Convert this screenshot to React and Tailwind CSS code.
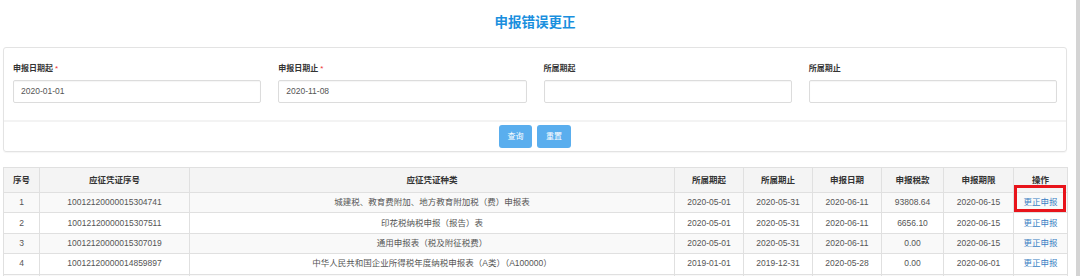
import React from "react";

const rows = [
  ["1", "10012120000015304741", "城建税、教育费附加、地方教育附加税（费）申报表", "2020-05-01", "2020-05-31", "2020-06-11", "93808.64", "2020-06-15"],
  ["2", "10012120000015307511", "印花税纳税申报（报告）表", "2020-05-01", "2020-05-31", "2020-06-11", "6656.10", "2020-06-15"],
  ["3", "10012120000015307019", "通用申报表（税及附征税费）", "2020-05-01", "2020-05-31", "2020-06-11", "0.00", "2020-06-15"],
  ["4", "10012120000014859897", "中华人民共和国企业所得税年度纳税申报表（A类）（A100000）", "2019-01-01", "2019-12-31", "2020-05-28", "0.00", "2020-06-01"],
  ["", "", "", "", "", "", "", ""],
];

const widths = [36, 150, 485, 69, 69, 69, 62, 70, 54];
const heads = ["序号", "应征凭证序号", "应征凭证种类", "所属期起", "所属期止", "申报日期", "申报税款", "申报期限", "操作"];

function Field({ label, required, value }) {
  return (
    <div className="flex flex-col">
      <div className="h-[10px] flex items-center text-[8px] font-bold text-[#333] leading-none">
        {label}
        {required && <span className="text-[#e33] ml-[2px] font-normal text-[8px]">*</span>}
      </div>
      <div className="mt-[6px] h-[23px] border border-[#dcdcdc] rounded-[2px] flex items-center pl-[7px] text-[8.5px] text-[#555] shadow-[inset_0_1px_1px_rgba(0,0,0,0.04)]">
        {value}
      </div>
    </div>
  );
}

export default function App() {
  return (
    <div
      className="relative w-[1080px] h-[276px] overflow-hidden bg-white"
      style={{ fontFamily: '"Liberation Sans", Arial, "Noto Sans CJK SC", sans-serif' }}
    >
      <div className="pl-[3px] w-[1067px]">
        <div className="h-[47px] flex items-center justify-center pb-[1px]">
          <h1 className="text-[13.5px] font-bold text-[#1a8fde]">申报错误更正</h1>
        </div>

        <div className="border border-[#e3e3e3] rounded-[3px] shadow-[0_1px_1px_rgba(0,0,0,0.04)]">
          <div className="h-[72px] pt-[16px] px-[9px] grid grid-cols-4 gap-x-[17px]">
            <Field label="申报日期起" required value="2020-01-01" />
            <Field label="申报日期止" required value="2020-11-08" />
            <Field label="所属期起" value="" />
            <Field label="所属期止" value="" />
          </div>
          <div className="h-[2px] bg-[#f3f3f3]" />
          <div className="h-[29px] flex items-center justify-center gap-[5px]">
            <button className="w-[33px] h-[23px] rounded-[3px] bg-[#5aaeee] text-white text-[8px]">查询</button>
            <button className="w-[34px] h-[23px] rounded-[3px] bg-[#5aaeee] text-white text-[8px]">重置</button>
          </div>
        </div>

        <table className="mt-[15px] w-[1064px] table-fixed border-collapse text-[8.5px] text-[#555]">
          <colgroup>
            {widths.map((w, i) => (
              <col key={i} style={{ width: w }} />
            ))}
          </colgroup>
          <thead>
            <tr className="h-[25px] bg-[#f4f4f4]">
              {heads.map((h) => (
                <th key={h} className="border border-[#e0e0e0] font-bold text-[#333] text-center">
                  {h}
                </th>
              ))}
            </tr>
          </thead>
          <tbody>
            {rows.map((r, i) => (
              <tr key={i} className={`h-[20.4px] ${i % 2 === 0 ? "bg-[#f9f9f9]" : "bg-white"}`}>
                {r.map((c, j) => (
                  <td key={j} className="border border-[#e0e0e0] text-center whitespace-nowrap overflow-hidden">
                    {c}
                  </td>
                ))}
                <td className="border border-[#e0e0e0] text-center text-[#3a7fc4]">{i < 4 ? "更正申报" : ""}</td>
              </tr>
            ))}
          </tbody>
        </table>
      </div>

      <div className="absolute left-[1014px] top-[185px] w-[52px] h-[27px] border-[3px] border-[#e8141b]" />
      <div className="absolute right-0 top-0 w-[4px] h-full bg-[#d4d4d4]" />
    </div>
  );
}
